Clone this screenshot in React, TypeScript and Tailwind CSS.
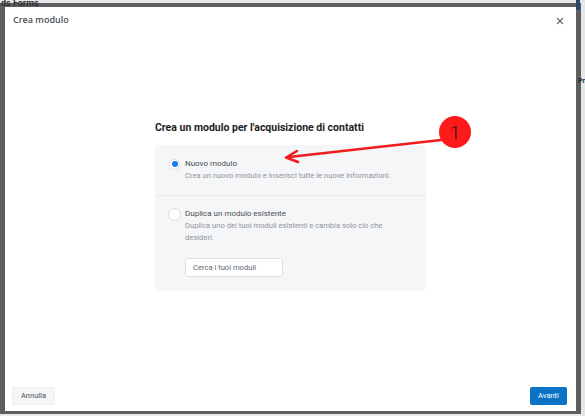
import React from "react";

export default function App() {
  return (
    <div
      className="relative w-[585px] h-[416px] overflow-hidden bg-[#e6e7e9] pt-[3px] pr-[4px] pb-[2px]"
      style={{ fontFamily: "Roboto, 'Liberation Sans', sans-serif" }}
    >
      <div className="relative h-full w-full bg-[#5e5e5e] pl-[5px] pt-[4px] pr-[5px] pb-[3px]">
        <div className="flex h-full w-full flex-col bg-white">
          {/* header */}
          <div className="flex h-[26px] items-center justify-between pl-[8px] pr-[12px]">
            <span
              className="text-[9px] font-semibold text-[#4b4f56]"
              style={{ fontFamily: "'Open Sans', Roboto, sans-serif" }}
            >
              Crea modulo
            </span>
            <svg width="8" height="8" viewBox="0 0 8 8" className="mt-[2px]">
              <path d="M1 1 L7 7 M7 1 L1 7" stroke="#606770" strokeWidth="1.1" />
            </svg>
          </div>
          {/* body */}
          <div className="flex flex-1 flex-col items-center pt-[88px]">
            <div className="w-[271px]">
              <div className="text-[10.5px] leading-[14px] font-bold text-[#1c1e21]">
                Crea un modulo per l'acquisizione di contatti
              </div>
              <div className="mt-[10px] rounded-[4px] bg-[#f5f6f7]">
                <div className="flex items-start gap-[5px] pl-[14px] pr-[10px] pt-[13px] pb-[13px]">
                  <div className="mt-[0.5px] flex h-[11px] w-[11px] shrink-0 items-center justify-center rounded-full border border-[#dadde1] bg-white">
                    <div className="h-[6px] w-[6px] rounded-full bg-[#1877f2]" />
                  </div>
                  <div>
                    <div className="text-[8px] leading-[12px] font-normal text-[#4b4f56]">Nuovo modulo</div>
                    <div className="text-[7.6px] leading-[12px] text-[#90949c]">
                      Crea un nuovo modulo e inserisci tutte le nuove informazioni.
                    </div>
                  </div>
                </div>
                <div className="h-[1px] bg-[#e9ebee]" />
                <div className="flex items-start gap-[4px] pl-[13px] pr-[10px] pt-[12px] pb-[14px]">
                  <div className="h-[13px] w-[13px] shrink-0 rounded-full border border-[#dadde1] bg-white" />
                  <div>
                    <div className="text-[8px] leading-[12px] font-normal text-[#4b4f56]">Duplica un modulo esistente</div>
                    <div className="w-[205px] text-[7.6px] leading-[12px] text-[#90949c]">
                      Duplica uno dei tuoi moduli esistenti e cambia solo ciò che desideri.
                    </div>
                    <div className="mt-[14px] flex h-[19px] w-[98px] items-center rounded-[3px] border border-[#dddfe2] bg-white pl-[7px] text-[7.6px] text-[#606770]">
                      Cerca i tuoi moduli
                    </div>
                  </div>
                </div>
              </div>
            </div>
          </div>
          {/* footer */}
          <div className="flex items-center justify-between pl-[7px] pr-[9px] pb-[6px]">
            <div className="flex h-[18px] w-[43px] items-center justify-center rounded-[2px] border border-[#eceef0] bg-[#f5f6f7] text-[7.5px] text-[#4b4f56]">
              Annulla
            </div>
            <div className="flex h-[18px] w-[37px] items-center justify-center rounded-[2px] bg-[#0b72c5] text-[7.5px] text-white">
              Avanti
            </div>
          </div>
        </div>
      </div>

      {/* background bits behind overlay */}
      <div className="absolute left-[1px] top-[-2px] text-[9px] leading-[10px] font-bold text-[#2e3338]">ds Forms</div>
      <div className="absolute right-[5px] top-0 h-[10px] w-[4px] bg-[#274a6b]" />
      <div className="absolute right-0 top-[76px] text-[7px] font-bold text-[#2b2b2b]">Pr</div>

      {/* annotation */}
      <svg className="pointer-events-none absolute left-0 top-0" width="585" height="416">
        <line x1="441" y1="140" x2="289" y2="157" stroke="#f21c1c" strokeWidth="2.5" strokeLinecap="round" />
        <path d="M297 151 L286 157.5 L298 162" fill="none" stroke="#f21c1c" strokeWidth="2.5" strokeLinecap="round" strokeLinejoin="round" />
        <circle cx="455" cy="132" r="16" fill="#ff1a1a" />
        <text x="455" y="139" textAnchor="middle" fontSize="19" fontFamily="Roboto, sans-serif" fill="#1a1a1a" fontWeight="300">1</text>
      </svg>
    </div>
  );
}
